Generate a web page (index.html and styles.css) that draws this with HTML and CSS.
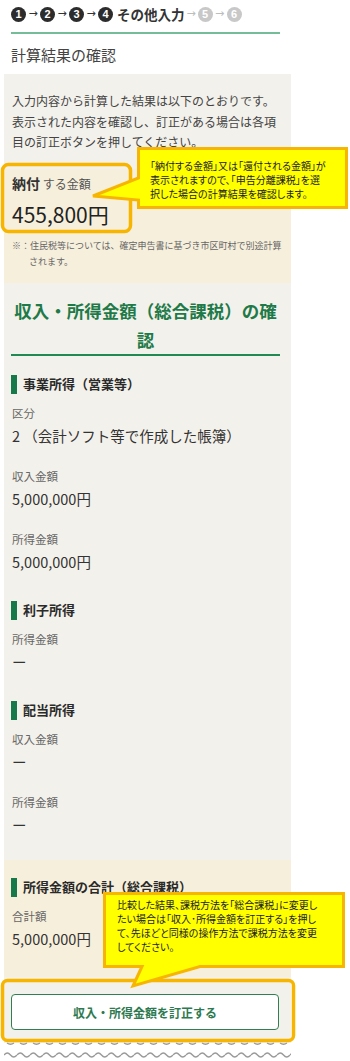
FILE: index.html
```html
<!DOCTYPE html>
<html lang="ja">
<head>
<meta charset="utf-8">
<title>計算結果の確認</title>
<link rel="stylesheet" href="styles.css">
</head>
<body>
<div class="page">
  <div class="steps">
    <span class="num">1</span><span class="arr">→</span>
    <span class="num">2</span><span class="arr">→</span>
    <span class="num">3</span><span class="arr">→</span>
    <span class="num">4</span><span class="cur">その他入力</span><span class="arr off narrow">→</span>
    <span class="num off">5</span><span class="arr off">→</span>
    <span class="num off">6</span>
  </div>
  <h1 class="title">計算結果の確認</h1>

  <main class="panel">
    <p class="intro">入力内容から計算した結果は以下のとおりです。表示された内容を確認し、訂正がある場合は各項目の訂正ボタンを押してください。</p>

    <section class="result">
      <div class="pay-label"><b>納付</b> する金額</div>
      <div class="pay-amount">455,800円</div>
      <p class="note">※：住民税等については、確定申告書に基づき市区町村で別途計算<br>されます。</p>
    </section>

    <h2 class="sec-title">収入・所得金額（総合課税）の確<br>認</h2>

    <section class="group first">
      <h3 class="group-title">事業所得（営業等）</h3>
      <div class="label">区分</div>
      <div class="value">2 （会計ソフト等で作成した帳簿）</div>
      <div class="label">収入金額</div>
      <div class="value">5,000,000円</div>
      <div class="label">所得金額</div>
      <div class="value">5,000,000円</div>
    </section>

    <section class="group">
      <h3 class="group-title">利子所得</h3>
      <div class="label">所得金額</div>
      <div class="value">ー</div>
    </section>

    <section class="group">
      <h3 class="group-title">配当所得</h3>
      <div class="label">収入金額</div>
      <div class="value">ー</div>
      <div class="label">所得金額</div>
      <div class="value">ー</div>
    </section>

    <section class="group total">
      <h3 class="group-title">所得金額の合計（総合課税）</h3>
      <div class="label">合計額</div>
      <div class="value">5,000,000円</div>
    </section>

    <button class="fix-btn" type="button">収入・所得金額を訂正する</button>
  </main>

  <svg class="tear" width="287" height="20" viewBox="0 0 287 20" aria-hidden="true">
    <defs>
      <pattern id="w1" width="13" height="20" patternUnits="userSpaceOnUse">
        <path d="M3 2 Q6.5 4.5 10 2" stroke="#9a9a9a" stroke-width="1.3" fill="none"/>
      </pattern>
      <pattern id="w2" width="13" height="20" patternUnits="userSpaceOnUse">
        <path d="M0 14 Q3.25 10 6.5 14 T13 14" stroke="#9a9a9a" stroke-width="1.3" fill="none"/>
      </pattern>
    </defs>
    <rect width="287" height="20" fill="url(#w1)"/>
    <rect width="287" height="20" fill="url(#w2)"/>
  </svg>

  <svg class="overlay" width="350" height="1061" viewBox="0 0 350 1061" aria-hidden="true">
    <rect x="2.5" y="164.5" width="128" height="67" rx="6" fill="none" stroke="#f7b500" stroke-width="3.5"/>
    <rect x="2.5" y="980.5" width="291" height="60" rx="5" fill="none" stroke="#f7b500" stroke-width="3.5"/>
    <path d="M138.5 148.5 H346.5 V207.5 H138.5 V200 L93 196 L138.5 178 Z" fill="#ffff00" stroke="#f7b500" stroke-width="3"/>
    <path d="M104.5 893.5 H343.5 V966.5 H200 L133 986 L142 966.5 H104.5 Z" fill="#ffff00" stroke="#f7b500" stroke-width="3"/>
  </svg>

  <div class="callout c1">「納付する金額」又は「還付される金額」が<br>表示されますので、「申告分離課税」を選<br>択した場合の計算結果を確認します。</div>
  <div class="callout c2">比較した結果、課税方法を「総合課税」に変更し<br>たい場合は「収入･所得金額を訂正する」を押し<br>て、先ほどと同様の操作方法で課税方法を変更<br>してください。</div>
</div>
</body>
</html>
```

FILE: styles.css
```css
* { box-sizing: border-box; margin: 0; padding: 0; }

body {
  margin: 0;
  background: #ffffff;
  font-family: "Noto Sans CJK JP", "Noto Sans", sans-serif;
  color: #333333;
}

.page {
  position: relative;
  width: 350px;
  height: 1061px;
  overflow: hidden;
}

/* step indicator */
.steps {
  margin-left: 11px;
  width: 269px;
  height: 34px;
  padding-top: 6px;
  border-bottom: 2px solid #74bd98;
  display: flex;
  align-items: flex-start;
}

.num {
  display: inline-block;
  width: 15px;
  height: 15px;
  border-radius: 50%;
  background: #2c2c2c;
  color: #ffffff;
  font: bold 11px/15px "Liberation Sans", sans-serif;
  text-align: center;
  margin-top: 1px;
}

.num.off { background: #c8c8c8; }

.arr {
  width: 14px;
  text-align: center;
  font: 11px/16px "DejaVu Sans", sans-serif;
  color: #333333;
}

.arr.off { color: #bdbdbd; }
.arr.narrow { width: 13px; }

.cur {
  margin-left: 4px;
  font-size: 13.5px;
  line-height: 16px;
  font-weight: bold;
  color: #333333;
}

.title {
  margin: 10px 0 8px 11px;
  font-size: 15px;
  line-height: 22px;
  font-weight: normal;
  color: #444444;
}

/* main panel */
.panel {
  margin-left: 4px;
  width: 287px;
  background: #f3f1eb;
  padding-bottom: 13px;
}

.intro {
  padding: 17px 10px 0 8px;
  font-size: 12px;
  line-height: 20.5px;
  color: #444444;
}

.result {
  margin-top: 16px;
  background: #f6efdc;
  padding: 4px 10px 12px 8px;
}

.pay-label {
  font-size: 12px;
  line-height: 20px;
  color: #555555;
}

.pay-label b {
  font-size: 14px;
  color: #333333;
}

.pay-amount {
  margin-top: 6px;
  font-size: 21px;
  line-height: 28px;
  color: #222222;
}

.note {
  margin-top: 10px;
  padding-left: 17px;
  text-indent: -17px;
  font-size: 9px;
  line-height: 16.5px;
  color: #666666;
  white-space: nowrap;
}

.sec-title {
  margin: 14.5px 11px 0 7px;
  text-align: center;
  font-size: 17.5px;
  line-height: 28.5px;
  font-weight: bold;
  color: #1e7a48;
  border-bottom: 2px solid #1f8a52;
}

.group { padding: 0 10px 0 7px; }

.group-title {
  display: flex;
  align-items: center;
  margin-top: 26px;
  font-size: 13px;
  line-height: 20px;
  font-weight: bold;
  color: #2a2a2a;
}

.group.first .group-title { margin-top: 18px; }

.group-title::before {
  content: "";
  width: 6px;
  height: 19px;
  margin-right: 6px;
  background: #17794a;
}

.label {
  margin-top: 19px;
  padding-left: 1px;
  font-size: 11.5px;
  line-height: 18px;
  color: #666666;
}

.group-title + .label { margin-top: 10px; }

.value {
  margin-top: 2px;
  padding-left: 1px;
  font-size: 14.5px;
  line-height: 24px;
  color: #333333;
}

.group.total {
  margin-top: 23px;
  padding-top: 17px;
  padding-bottom: 26px;
  background: #f6efdc;
}

.group.total .group-title { margin-top: 0; }

.fix-btn {
  display: flex;
  align-items: center;
  justify-content: center;
  width: 268px;
  height: 36px;
  margin: 17px 0 0 7px;
  background: #ffffff;
  border: 1.5px solid #2f7f52;
  border-radius: 4px;
  font-family: "Noto Sans CJK JP", "Noto Sans", sans-serif;
  font-size: 12px;
  font-weight: bold;
  color: #2d7a50;
}

.tear {
  display: block;
  margin: -2px 0 0 4px;
}

/* overlays */
.overlay {
  position: absolute;
  left: 0;
  top: 0;
  pointer-events: none;
}

.callout {
  position: absolute;
  font-size: 10px;
  line-height: 14px;
  color: #222222;
  font-feature-settings: "palt";
  white-space: nowrap;
}

.callout.c1 { left: 150px; top: 159px; }
.callout.c2 { left: 117px; top: 898px; }
```
